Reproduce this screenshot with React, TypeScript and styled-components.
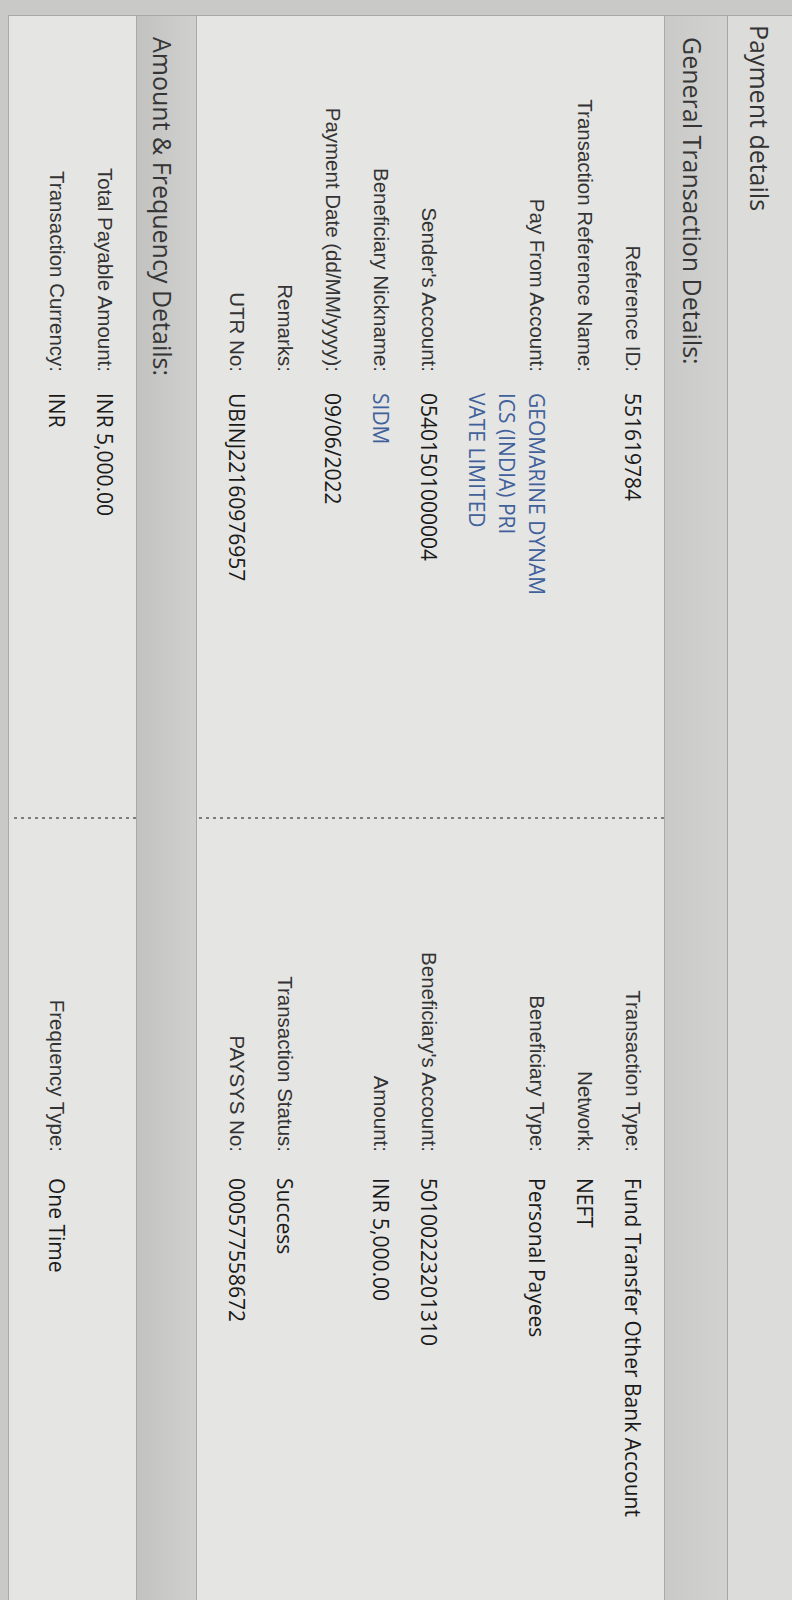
import React from "react";
import styled, { createGlobalStyle } from "styled-components";

const GlobalStyle = createGlobalStyle`
  html, body {
    margin: 0;
    padding: 0;
    background: #c6c6c4;
    overflow: hidden;
  }
`;

interface Field {
  label: string;
  value?: string;
  blue?: boolean;
  lines?: number;
}

const wrapAt = (text: string, size: number) => {
  const out: string[] = [];
  for (let i = 0; i < text.length; i += size) out.push(text.slice(i, i + size));
  return out;
};

const generalLeft: Field[] = [
  { label: "Reference ID:", value: "551619784" },
  { label: "Transaction Reference Name:", value: "" },
  { label: "Pay From Account:", value: "GEOMARINE DYNAMICS (INDIA) PRIVATE LIMITED", blue: true, lines: 3 },
  { label: "Sender's Account:", value: "05401501000004" },
  { label: "Beneficiary Nickname:", value: "SIDM", blue: true },
  { label: "Payment Date (dd/MM/yyyy):", value: "09/06/2022" },
  { label: "Remarks:", value: "" },
  { label: "UTR No:", value: "UBINJ22160976957" },
];

const generalRight: Field[] = [
  { label: "Transaction Type:", value: "Fund Transfer Other Bank Account" },
  { label: "Network:", value: "NEFT" },
  { label: "Beneficiary Type:", value: "Personal Payees", lines: 3 },
  { label: "Beneficiary's Account:", value: "50100223201310" },
  { label: "Amount:", value: "INR 5,000.00" },
  { label: "" },
  { label: "Transaction Status:", value: "Success" },
  { label: "PAYSYS No:", value: "000577558672" },
];

const amountLeft: Field[] = [
  { label: "Total Payable Amount:", value: "INR 5,000.00" },
  { label: "Transaction Currency:", value: "INR" },
];

const amountRight: Field[] = [{ label: "" }, { label: "Frequency Type:", value: "One Time" }];

const FieldRows = ({ fields, side }: { fields: Field[]; side: "left" | "right" }) => (
  <>
    {fields.map((f, i) => (
      <Row key={side + "-" + i} $lines={f.lines || 1}>
        <Label $side={side}>{f.label}</Label>
        <Value $blue={f.blue}>
          {f.value && f.lines && f.blue
            ? wrapAt(f.value, 15).map((line) => <Line key={line}>{line}</Line>)
            : f.value}
        </Value>
      </Row>
    ))}
  </>
);

const App = () => {
  // Main return
  return (
    <Viewport>
      <GlobalStyle />
      <Sheet>
        <Panel>
          <TitleBar>Payment details</TitleBar>
          <SectionHeader>General Transaction Details:</SectionHeader>
          <SectionBody $general>
            <LeftColumn>
              <FieldRows fields={generalLeft} side="left" />
            </LeftColumn>
            <RightColumn>
              <FieldRows fields={generalRight} side="right" />
            </RightColumn>
          </SectionBody>
          <SectionHeader $dark>Amount &amp; Frequency Details:</SectionHeader>
          <SectionBody>
            <LeftColumn>
              <FieldRows fields={amountLeft} side="left" />
            </LeftColumn>
            <RightColumn>
              <FieldRows fields={amountRight} side="right" />
            </RightColumn>
          </SectionBody>
        </Panel>
      </Sheet>
    </Viewport>
  );
};

export default App;

const Viewport = styled.div`
  width: 792px;
  height: 1600px;
  overflow: hidden;
  background: #c6c6c4;
`;

// the photographed screen is turned a quarter clockwise
const Sheet = styled.div`
  width: 1600px;
  height: 792px;
  transform-origin: top left;
  transform: translateX(792px) rotate(90deg);
  display: flex;
  background: #c9c9c7;
  padding-left: 15px;
  padding-bottom: 8px;
  box-sizing: border-box;
`;

const Panel = styled.div`
  flex: 1;
  display: flex;
  flex-direction: column;
  border-left: 1px solid #a9a9a7;
  border-bottom: 1px solid #a9a9a7;
  background: #e4e4e2;
`;

const TitleBar = styled.div`
  height: 64px;
  display: flex;
  align-items: center;
  padding-left: 9px;
  background: #dcdcda;
  border-bottom: 1px solid #a6a6a4;
  font-family: "Open Sans", sans-serif;
  font-size: 25px;
  color: #333;
`;

const SectionHeader = styled.div<{ $dark?: boolean }>`
  height: ${({ $dark }) => ($dark ? "61px" : "63px")};
  display: flex;
  align-items: center;
  padding: 6px 0 0 21px;
  box-sizing: border-box;
  background: ${({ $dark }) =>
    $dark ? "linear-gradient(#d0d0ce, #c2c2c0)" : "linear-gradient(#d2d2d0, #c9c9c7)"};
  border-bottom: 1px solid #a9a9a7;
  border-top: ${({ $dark }) => ($dark ? "1px solid #a9a9a7" : "none")};
  font-family: "Open Sans", sans-serif;
  font-size: 25px;
  color: #353535;
`;

const SectionBody = styled.div<{ $general?: boolean }>`
  display: flex;
  height: ${({ $general }) => ($general ? "467px" : "124px")};
  background: #e5e5e3;
`;

// dotted divider: short dark dots about 7px apart
const LeftColumn = styled.div`
  width: 803px;
  padding-top: 7px;
  display: flex;
  flex-direction: column;
  background-image: linear-gradient(to bottom, #7d7d7b 3px, transparent 3px);
  background-size: 2px 7px;
  background-position: right top;
  background-repeat: repeat-y;
`;

const RightColumn = styled.div`
  flex: 1;
  padding-top: 7px;
  display: flex;
  flex-direction: column;
`;

const Row = styled.div<{ $lines: number }>`
  display: flex;
  align-items: flex-start;
  padding: 9px 0;
  min-height: ${({ $lines }) => $lines * 30}px;
`;

const Label = styled.div<{ $side: "left" | "right" }>`
  width: ${({ $side }) => ($side === "left" ? "356px" : "333px")};
  margin-right: ${({ $side }) => ($side === "left" ? "21px" : "26px")};
  flex-shrink: 0;
  text-align: right;
  line-height: 30px;
  font-family: "Liberation Sans", Arial, sans-serif;
  font-size: 20.5px;
  color: #333;
`;

const Value = styled.div<{ $blue?: boolean }>`
  line-height: 30px;
  font-family: "Open Sans", sans-serif;
  font-size: 21px;
  color: ${({ $blue }) => ($blue ? "#41619b" : "#1a1a1a")};
  white-space: nowrap;
`;

const Line = styled.div`
  line-height: 30px;
`;
